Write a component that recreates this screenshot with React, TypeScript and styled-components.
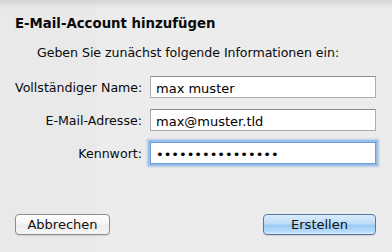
import { useState } from "react";
import styled, { createGlobalStyle } from "styled-components";

const GlobalStyle = createGlobalStyle`
  html, body {
    margin: 0;
    padding: 0;
    background: #ececec;
  }
  * {
    box-sizing: border-box;
  }
`;

const Sheet = styled.div`
  width: 392px;
  height: 252px;
  display: flex;
  flex-direction: column;
  font-family: "DejaVu Sans", "Liberation Sans", sans-serif;
  font-size: 12.6px;
  color: #0a0a0a;
  background:
    linear-gradient(to bottom, rgba(0, 0, 0, 0.09) 0, rgba(0, 0, 0, 0) 9px),
    linear-gradient(to right, #e9e9e9 0, #e9e9e9 97px, #ececec 97px);
  overflow: hidden;
`;

const Title = styled.h1`
  margin: 16px 0 0 15px;
  font-size: 13.3px;
  font-weight: bold;
  line-height: 16px;
`;

const Intro = styled.p`
  margin: 13px 0 0 37px;
  line-height: 16px;
  letter-spacing: -0.05px;
`;

const Fields = styled.div`
  display: grid;
  grid-template-columns: 127px 226px;
  column-gap: 8px;
  row-gap: 11px;
  margin: 15px 0 0 15px;
  align-items: center;
`;

const Label = styled.label`
  text-align: right;
  white-space: nowrap;
`;

const Field = styled.input<{ $focused?: boolean }>`
  height: 22px;
  width: 226px;
  padding: 2px 4px 0 5px;
  border: 1px solid ${(p) => (p.$focused ? "#6d9cd6" : "#acacac")};
  border-top-color: ${(p) => (p.$focused ? "#6d9cd6" : "#8e8e8e")};
  background: #fff;
  font-family: inherit;
  font-size: 13px;
  color: #000;
  outline: none;
  box-shadow: ${(p) =>
    p.$focused ? "0 0 0 2px #98bde9, 0 0 2px 3px rgba(120,165,220,0.45)" : "none"};
`;

const Actions = styled.div`
  margin: auto 16px 17px 15px;
  display: flex;
  justify-content: space-between;
`;

const Button = styled.button<{ $primary?: boolean }>`
  height: 21px;
  width: ${(p) => (p.$primary ? "113px" : "95px")};
  border-radius: 4px;
  font-family: inherit;
  font-size: 13px;
  color: #111;
  padding: 0;
  border: 1px solid ${(p) => (p.$primary ? "#5b76a3" : "#8c8c8c")};
  background: ${(p) =>
    p.$primary
      ? "linear-gradient(to bottom, #dcecfb 0%, #bddcf8 45%, #9ccbf3 55%, #b5dafb 85%, #d4ecfe 100%)"
      : "linear-gradient(to bottom, #ffffff 0%, #f6f6f6 45%, #ececec 55%, #f5f5f5 100%)"};
  box-shadow: 0 1px 1px rgba(0, 0, 0, 0.12);
`;

export default function App() {
  const [name, setName] = useState("max muster");
  const [email, setEmail] = useState("max@muster.tld");
  const [password, setPassword] = useState("xxxxxxxxxxxxxxxx");

  return (
    <>
      <GlobalStyle />
      <Sheet>
        <Title>E-Mail-Account hinzufügen</Title>
        <Intro>Geben Sie zunächst folgende Informationen ein:</Intro>
        <Fields>
          <Label htmlFor="name">Vollständiger Name:</Label>
          <Field id="name" value={name} onChange={(e) => setName(e.target.value)} />
          <Label htmlFor="email">E-Mail-Adresse:</Label>
          <Field id="email" value={email} onChange={(e) => setEmail(e.target.value)} />
          <Label htmlFor="password">Kennwort:</Label>
          <Field
            id="password"
            type="password"
            $focused
            value={password}
            onChange={(e) => setPassword(e.target.value)}
          />
        </Fields>
        <Actions>
          <Button>Abbrechen</Button>
          <Button $primary>Erstellen</Button>
        </Actions>
      </Sheet>
    </>
  );
}
